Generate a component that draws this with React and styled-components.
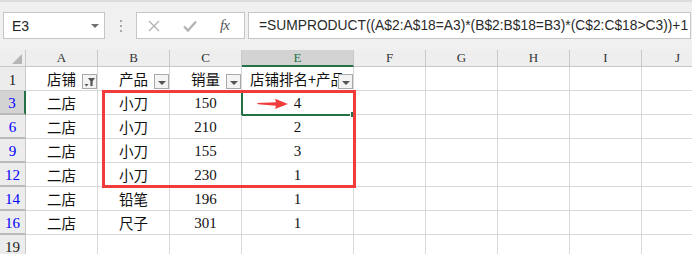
import React from 'react';
import styled, { createGlobalStyle } from 'styled-components';

const GlobalStyle = createGlobalStyle`
  html, body { margin: 0; padding: 0; background: #fff; }
  body { width: 692px; height: 254px; overflow: hidden; }
`;

const Page = styled.div`
  width: 692px;
  height: 254px;
  overflow: hidden;
  background: #fff;
  display: flex;
  flex-direction: column;
`;

const Toolbar = styled.div`
  height: 50px;
  flex: none;
  box-sizing: border-box;
  background: #f0f0f0;
  border-top: 2px solid #dcdcdc;
  display: flex;
  align-items: flex-start;
  padding: 10px 0 0 3px;
`;

const Box = styled.div`
  box-sizing: border-box;
  height: 27px;
  background: #fff;
  border: 1px solid #c6c6c6;
  display: flex;
  align-items: center;
  flex: none;
`;

const NameBox = styled(Box)`
  width: 102px;
  padding: 0 5px 0 8px;
  justify-content: space-between;
  font-family: 'Liberation Sans', Arial, sans-serif;
  font-size: 14px;
  color: #222;
`;

const Caret = styled.span`
  width: 0;
  height: 0;
  border-left: 4px solid transparent;
  border-right: 4px solid transparent;
  border-top: 4px solid #6f6f6f;
`;

const Grip = styled.div`
  width: 31px;
  height: 27px;
  flex: none;
  display: flex;
  flex-direction: column;
  align-items: center;
  justify-content: center;
  gap: 3px;
  span {
    width: 2px;
    height: 2px;
    background: #a8a8a8;
  }
`;

const ActionBox = styled(Box)`
  width: 109px;
  padding-left: 11px;
  gap: 23px;
`;

const Fx = styled.span`
  font-family: 'Liberation Serif', 'Times New Roman', serif;
  font-style: italic;
  font-size: 15px;
  color: #555;
  letter-spacing: -1px;
  line-height: 1;
`;

const FormulaBox = styled(Box)`
  width: 443px;
  margin-left: 3px;
  padding-left: 10px;
  font-family: 'Liberation Sans', Arial, sans-serif;
  font-size: 13.8px;
  color: #2a2a2a;
  white-space: nowrap;
  overflow: hidden;
`;

const Sheet = styled.div`
  position: relative;
  display: grid;
  grid-template-columns: 26px 72px 72px 72px 112px repeat(5, 72px);
  grid-template-rows: 17px repeat(8, 24px);
  width: 714px;
`;

const Corner = styled.div`
  box-sizing: border-box;
  background: #eeeeee;
  border-right: 1px solid #c8c8c8;
  border-bottom: 1px solid #c8c8c8;
  display: flex;
  align-items: flex-end;
  justify-content: flex-end;
  padding: 0 3px 2px 0;
`;

const ColHeader = styled.div`
  box-sizing: border-box;
  background: ${p => (p.$selected ? '#d3d3d3' : '#eeeeee')};
  border-right: 1px solid #c8c8c8;
  border-bottom: ${p => (p.$selected ? '2px solid #217346' : '1px solid #c8c8c8')};
  display: flex;
  align-items: flex-end;
  justify-content: center;
  padding-bottom: ${p => (p.$selected ? '0' : '1px')};
  font-family: 'Liberation Serif', 'Times New Roman', serif;
  font-size: 13px;
  line-height: 14px;
  color: ${p => (p.$selected ? '#217346' : '#333')};
`;

const RowHeader = styled.div`
  box-sizing: border-box;
  background: ${p => (p.$selected ? '#d3d3d3' : '#ececec')};
  border-right: ${p => (p.$selected ? '2px solid #217346' : '1px solid #c8c8c8')};
  border-bottom: ${p => (p.$hiddenAfter ? '2px solid #b9b9b9' : '1px solid #c8c8c8')};
  display: flex;
  align-items: flex-end;
  justify-content: center;
  padding-bottom: 1px;
  font-family: 'Liberation Serif', 'Times New Roman', serif;
  font-size: 15px;
  line-height: 18px;
  color: ${p => (p.$filtered ? '#0000ff' : '#222')};
`;

const Cell = styled.div`
  position: relative;
  box-sizing: border-box;
  border-right: 1px solid #d9d9d9;
  border-bottom: 1px solid #d9d9d9;
  display: flex;
  align-items: flex-end;
  justify-content: center;
  padding-bottom: 2px;
  overflow: ${p => (p.$clip ? 'hidden' : 'visible')};
  white-space: nowrap;
  font-family: ${p =>
    p.$num
      ? "'Liberation Serif', 'Times New Roman', serif"
      : "'Noto Sans CJK SC', 'Liberation Sans', sans-serif"};
  font-size: ${p => (p.$num ? '15px' : '14.5px')};
  line-height: 18px;
  color: #111;
`;

const FilterButton = styled.span`
  position: absolute;
  right: 0;
  bottom: 1px;
  width: 15px;
  height: 15px;
  box-sizing: border-box;
  border: 1px solid #a9a9a9;
  background: #f3f3f3;
  display: flex;
  align-items: center;
  justify-content: center;
`;

const DownTriangle = styled.span`
  width: 0;
  height: 0;
  margin-top: 2px;
  border-left: 4px solid transparent;
  border-right: 4px solid transparent;
  border-top: 4px solid #555;
`;

const Selection = styled.div`
  position: absolute;
  left: -1px;
  top: -1px;
  width: 114px;
  height: 26px;
  box-sizing: border-box;
  border: 2px solid #217346;
  pointer-events: none;
`;

const FillHandle = styled.span`
  position: absolute;
  right: -4px;
  bottom: -4px;
  width: 5px;
  height: 5px;
  background: #217346;
  border: 1px solid #fff;
`;

const Arrow = styled.svg`
  position: absolute;
  left: 15px;
  top: 7px;
`;

const Highlight = styled.div`
  position: absolute;
  left: 102px;
  top: 40px;
  width: 254px;
  height: 98px;
  box-sizing: border-box;
  border: 3px solid #f23c3c;
  pointer-events: none;
`;

const columns = ['A', 'B', 'C', 'E', 'F', 'G', 'H', 'I', 'J'];

const rows = [
  { n: '1', filtered: false, cells: ['店铺', '产品', '销量', '店铺排名+产品'], header: true },
  { n: '3', filtered: true, selected: true, cells: ['二店', '小刀', '150', '4'] },
  { n: '6', filtered: true, cells: ['二店', '小刀', '210', '2'] },
  { n: '9', filtered: true, cells: ['二店', '小刀', '155', '3'] },
  { n: '12', filtered: true, cells: ['二店', '小刀', '230', '1'] },
  { n: '14', filtered: true, cells: ['二店', '铅笔', '196', '1'] },
  { n: '16', filtered: true, cells: ['二店', '尺子', '301', '1'] },
  { n: '19', filtered: false, cells: ['', '', '', ''] },
];

const isNum = s => /^\d+$/.test(s);

function FilterIcon({ active }) {
  return (
    <FilterButton>
      {active ? (
        <svg width="13" height="13" viewBox="0 0 13 13">
          <polygon points="5,3 12,3 9.6,6.3 9.6,11 7.4,11 7.4,6.3" fill="#555" />
          <polygon points="1.5,9 5.5,9 3.5,11.5" fill="#555" />
        </svg>
      ) : (
        <DownTriangle />
      )}
    </FilterButton>
  );
}

export default function App() {
  return (
    <Page>
      <GlobalStyle />
      <Toolbar>
        <NameBox>
          <span>E3</span>
          <Caret />
        </NameBox>
        <Grip>
          <span />
          <span />
          <span />
        </Grip>
        <ActionBox>
          <svg width="12" height="12" viewBox="0 0 12 12">
            <path d="M1 1 L11 11 M11 1 L1 11" stroke="#b4b4b4" strokeWidth="1.4" />
          </svg>
          <svg width="14" height="12" viewBox="0 0 14 12">
            <path d="M1 6.5 L5 10.5 L13 1.5" stroke="#b4b4b4" strokeWidth="2.4" fill="none" />
          </svg>
          <Fx>fx</Fx>
        </ActionBox>
        <FormulaBox>=SUMPRODUCT((A$2:A$18=A3)*(B$2:B$18=B3)*(C$2:C$18&gt;C3))+1</FormulaBox>
      </Toolbar>
      <Sheet>
        <Corner>
          <svg width="10" height="10" viewBox="0 0 10 10">
            <polygon points="10,0 10,10 0,10" fill="#b5b5b5" />
          </svg>
        </Corner>
        {columns.map(c => (
          <ColHeader key={c} $selected={c === 'E'}>
            {c}
          </ColHeader>
        ))}
        {rows.map((r, ri) => (
          <React.Fragment key={r.n}>
            <RowHeader $filtered={r.filtered} $selected={r.selected} $hiddenAfter={ri > 0}>
              {r.n}
            </RowHeader>
            {r.cells.map((v, ci) => (
              <Cell key={ci} $num={isNum(v)} $clip={r.header && ci === 3}>
                {v}
                {r.header && <FilterIcon active={ci === 0} />}
                {r.selected && ci === 3 && (
                  <>
                    <Arrow width="32" height="12" viewBox="0 0 32 12">
                      <path d="M0 5 L19 4.2 L18 0.8 L31 6 L18 11 L19 7.8 L1 6.2 Z" fill="#f23c3c" />
                    </Arrow>
                    <Selection>
                      <FillHandle />
                    </Selection>
                  </>
                )}
              </Cell>
            ))}
            {columns.slice(4).map(c => (
              <Cell key={c} />
            ))}
          </React.Fragment>
        ))}
        <Highlight />
      </Sheet>
    </Page>
  );
}
